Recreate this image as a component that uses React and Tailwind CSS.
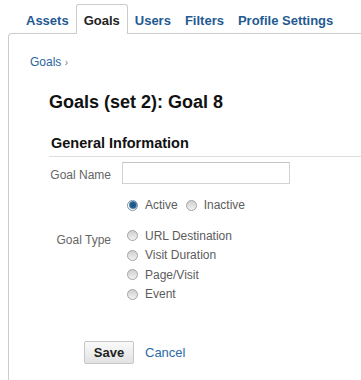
const tabs = ["Assets", "Goals", "Users", "Filters", "Profile Settings"];

const Radio = ({ checked }) => (
  <span
    className={`inline-flex items-center justify-center w-[11px] h-[11px] rounded-full border shrink-0 ${
      checked
        ? "border-[#7f8fa3] bg-white"
        : "border-[#a4a4a4] bg-gradient-to-b from-[#cfcfcf] to-[#f2f2f2]"
    }`}
  >
    {checked && (
      <span className="w-[6px] h-[6px] rounded-full bg-[#1c5a8c] shadow-[0_0_0_1px_#5b86ab]" />
    )}
  </span>
);

const Option = ({ label, checked, className = "" }) => (
  <label className={`flex items-center h-[19.5px] ${className}`}>
    <Radio checked={checked} />
    <span className="ml-[7px] text-[12px] leading-[14px] text-[#5c5c5c]">{label}</span>
  </label>
);

export default function App() {
  return (
    <div className="w-[361px] h-[380px] overflow-hidden bg-white font-['Liberation_Sans',Arial,sans-serif]">
      {/* tab strip */}
      <div className="flex pl-[19px] pt-[4px] h-[33px]">
        {tabs.map((t) =>
          t === "Goals" ? (
            <div
              key={t}
              className="relative z-10 h-[30px] px-[7px] pt-[8px] border border-b-0 border-[#cccccc] rounded-t-[3px] bg-white text-[13px] leading-[15px] font-bold text-[#222]"
            >
              {t}
            </div>
          ) : (
            <div
              key={t}
              className="h-[29px] px-[7px] pt-[9px] text-[13px] leading-[15px] font-bold text-[#1f5a92]"
            >
              {t}
            </div>
          )
        )}
      </div>

      {/* panel */}
      <div className="ml-[8px] h-[347px] border-l border-t border-[#cccccc] rounded-tl-[4px] pl-[21px] pt-[21px]">
        <div className="text-[12px] leading-[14px] text-[#2b64a0]">
          Goals <span className="text-[10px] text-[#777]">›</span>
        </div>

        <h1 className="mt-[22px] ml-[19px] text-[18px] leading-[21px] font-bold text-[#111]">
          Goals (set 2): Goal 8
        </h1>

        <div className="mt-[22px] ml-[19px] pl-[2px] pb-[4px] border-b border-[#dddddd] text-[14.5px] leading-[17px] font-bold text-[#111]">
          General Information
        </div>

        <div className="mt-[5px] flex items-center">
          <div className="w-[81px] pt-[3px] text-right text-[12px] leading-[14px] text-[#666]">Goal Name</div>
          <div className="ml-[11px] w-[168px] h-[22px] border border-[#d2d2d2] border-t-[#c4c4c4] bg-white" />
        </div>

        <div className="mt-[11px] ml-[97px] flex h-[20px] items-center">
          <Option label="Active" checked />
          <Option label="Inactive" className="ml-[8px]" />
        </div>

        <div className="mt-[11px] flex">
          <div className="w-[81px] pt-[7px] text-right text-[12px] leading-[14px] text-[#666]">Goal Type</div>
          <div className="ml-[16px] flex flex-col">
            <Option label="URL Destination" />
            <Option label="Visit Duration" />
            <Option label="Page/Visit" />
            <Option label="Event" />
          </div>
        </div>

        <div className="mt-[37px] ml-[54px] flex items-center">
          <button className="h-[23px] w-[50px] border border-[#c6c6c6] rounded-[2px] bg-gradient-to-b from-[#fafafa] to-[#e2e2e2] text-[13px] font-bold text-[#222]">
            Save
          </button>
          <span className="ml-[11px] text-[13px] text-[#2d6aa6]">Cancel</span>
        </div>
      </div>
    </div>
  );
}
